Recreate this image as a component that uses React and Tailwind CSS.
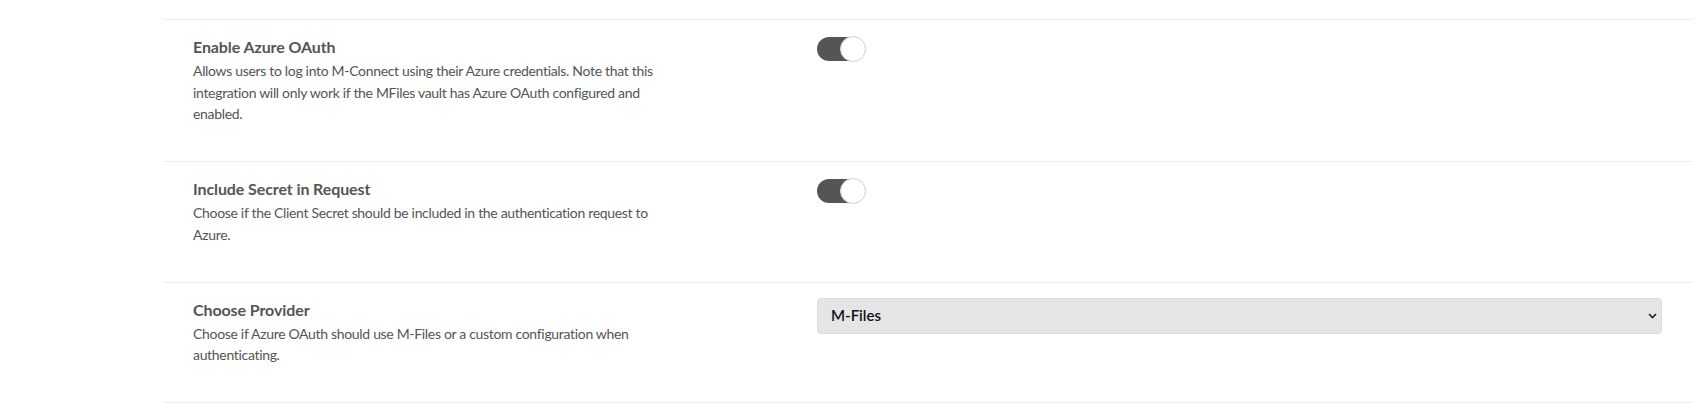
import React, { useState } from "react";

const SETTINGS = [
  {
    key: "azureOAuth",
    title: "Enable Azure OAuth",
    description:
      "Allows users to log into M-Connect using their Azure credentials. Note that this integration will only work if the MFiles vault has Azure OAuth configured and enabled.",
    type: "toggle",
  },
  {
    key: "includeSecret",
    title: "Include Secret in Request",
    description:
      "Choose if the Client Secret should be included in the authentication request to Azure.",
    type: "toggle",
  },
  {
    key: "provider",
    title: "Choose Provider",
    description:
      "Choose if Azure OAuth should use M-Files or a custom configuration when authenticating.",
    type: "select",
  },
];

function Toggle({ checked, onChange }) {
  return (
    <button
      type="button"
      onClick={() => onChange(!checked)}
      className={`relative mt-[2px] h-[24px] w-[48px] rounded-full ${
        checked ? "bg-[#555555]" : "bg-[#d5d5d5]"
      }`}
    >
      <span
        className={`absolute top-[-1px] h-[26px] w-[26px] rounded-full border border-[#d0d0d0] bg-white ${
          checked ? "right-[-1px]" : "left-[-1px]"
        }`}
      />
    </button>
  );
}

function ProviderSelect({ value, onChange }) {
  return (
    <div className="relative">
      <select
        value={value}
        onChange={(e) => onChange(e.target.value)}
        className="h-[36px] w-full appearance-none rounded-[4px] border border-[#dcdcdc] bg-[#e5e5e5] pl-[13px] text-[15px] font-semibold text-[#111111] outline-none"
      >
        <option value="M-Files">M-Files</option>
        <option value="Custom">Custom</option>
      </select>
      <svg
        className="pointer-events-none absolute right-[5px] top-[15px]"
        width="9"
        height="6"
        viewBox="0 0 9 6"
        fill="none"
      >
        <path d="M1 1l3.5 3.5L8 1" stroke="#222" strokeWidth="1.6" />
      </svg>
    </div>
  );
}

export default function App() {
  const [values, setValues] = useState({
    azureOAuth: true,
    includeSecret: true,
    provider: "M-Files",
  });

  const update = (key, v) => setValues((prev) => ({ ...prev, [key]: v }));

  return (
    <div className="min-h-[420px] bg-white pt-[19px] font-['Lato','Liberation_Sans',sans-serif]">
      <div className="ml-[164px] w-[1528px] border-b border-[#ebebeb]">
        {SETTINGS.map((s) => (
          <div
            key={s.key}
            className="flex border-t border-[#ebebeb] pb-[36px] pl-[29px] pr-[30px] pt-[15px]"
          >
            {/* Label column */}
            <div className="w-[624px] shrink-0">
              <h3 className="text-[16px] font-bold leading-[24px] tracking-[-0.1px] text-[#555555]">
                {s.title}
              </h3>
              <p className="mt-[1px] max-w-[485px] text-[14px] leading-[21.7px] tracking-[-0.32px] text-[#555555]">
                {s.description}
              </p>
            </div>

            {/* Control column */}
            <div className="flex-1">
              {s.type === "toggle" ? (
                <Toggle
                  checked={values[s.key]}
                  onChange={(v) => update(s.key, v)}
                />
              ) : (
                <ProviderSelect
                  value={values[s.key]}
                  onChange={(v) => update(s.key, v)}
                />
              )}
            </div>
          </div>
        ))}
      </div>
    </div>
  );
}
